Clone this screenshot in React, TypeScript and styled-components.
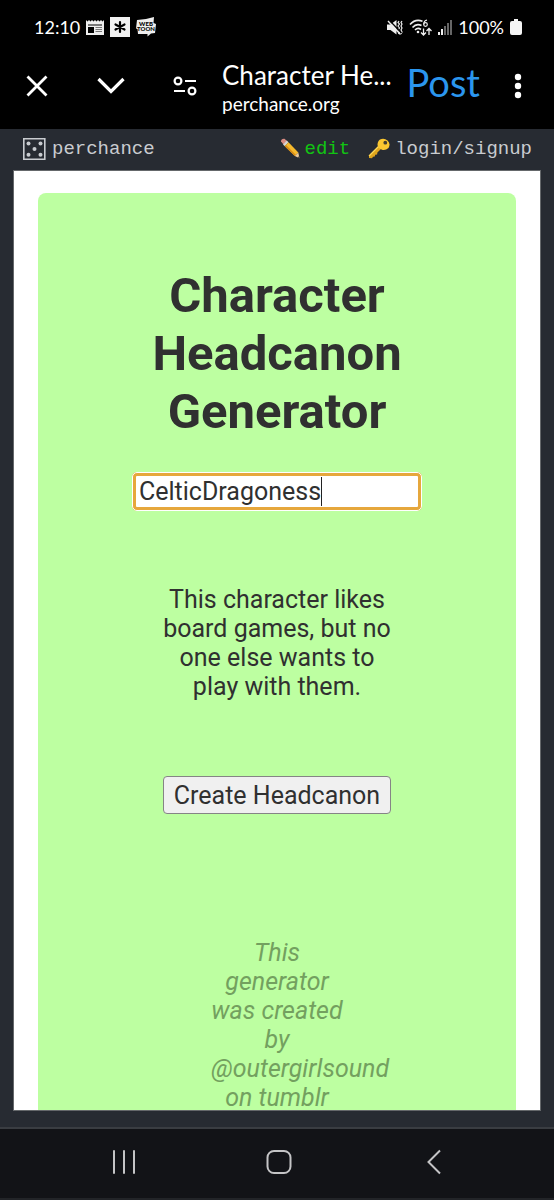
import React, { useState } from 'react';
import styled, { createGlobalStyle } from 'styled-components';

const GlobalStyle = createGlobalStyle`
  *, *::before, *::after { box-sizing: border-box; }
  body { margin: 0; background: #272b32; }
  h1, p { margin: 0; }
  button, input { font: inherit; color: inherit; margin: 0; }
  button { cursor: pointer; }
  svg { display: block; flex: none; }
`;

const Screen = styled.div`
  display: flex;
  flex-direction: column;
  height: 100vh;
  background: #272b32;
  font-family: Roboto, sans-serif;
`;

const PhoneTop = styled.header`
  flex: none;
  background: #000;
  color: #fff;
  font-family: Lato, sans-serif;
`;

const StatusBar = styled.div`
  display: flex;
  align-items: center;
  justify-content: space-between;
  height: 54px;
  padding: 0 32px 0 34px;
`;

const StatusGroup = styled.div<{ $gap: number }>`
  display: flex;
  align-items: center;
  gap: ${(p) => p.$gap}px;
`;

const StatusText = styled.span`
  font-size: 18px;
  line-height: 24px;
`;

const AppBar = styled.div`
  display: flex;
  align-items: center;
  height: 75px;
  padding: 0 8px 12px 20px;
`;

const IconButton = styled.button<{ $width: number }>`
  display: flex;
  align-items: center;
  justify-content: center;
  flex: none;
  width: ${(p) => p.$width}px;
  height: 48px;
  padding: 0;
  border: 0;
  background: none;
`;

const TitleBlock = styled.div`
  flex: 1;
  min-width: 0;
  padding: 4px 0 0 20px;
  white-space: nowrap;
`;

const PageTitle = styled.div`
  font-size: 26px;
  line-height: 32px;
`;

const PageHost = styled.div`
  font-size: 19px;
  line-height: 26px;
`;

const PostButton = styled.button`
  flex: none;
  margin-right: 10px;
  padding: 0 0 8px;
  border: 0;
  background: none;
  color: #2b96ee;
  font-size: 38px;
  line-height: 48px;
`;

const SiteBar = styled.nav`
  display: flex;
  align-items: center;
  justify-content: space-between;
  flex: none;
  height: 41px;
  padding: 0 22px 2px;
  font-family: 'Liberation Mono', monospace;
  font-size: 19px;
  line-height: 24px;
`;

const SiteLinks = styled.div`
  display: flex;
  gap: 18px;
`;

const SiteLink = styled.a<{ $color: string }>`
  display: flex;
  align-items: center;
  gap: 5px;
  color: ${(p) => p.$color};
  text-decoration: none;
`;

const Frame = styled.main`
  flex: 1 1 0;
  min-height: 0;
  margin: 0 13px 16px;
  padding: 22px 24px 0;
  border: 1px solid #65686b;
  background: #fff;
  overflow: hidden;
`;

const Card = styled.section`
  display: flex;
  flex-direction: column;
  align-items: center;
  padding: 74px 64px;
  border-radius: 8px;
  background: #bdffa1;
  color: #303030;
  font-size: 25px;
  line-height: 29px;
  text-align: center;
`;

const Heading = styled.h1`
  font-size: 49px;
  line-height: 58px;
  font-weight: 700;
`;

const NameField = styled.div`
  position: relative;
  width: 290px;
  margin-top: 31px;
`;

const NameInput = styled.input`
  display: block;
  width: 100%;
  height: 39px;
  padding: 0 3px;
  border: 4px solid #e6a73c;
  border-radius: 5px;
  outline: 1px solid #fff;
  outline-offset: -1px;
  background: #fff;
  caret-color: transparent;
`;

const Caret = styled.span`
  position: absolute;
  top: 5px;
  left: 189px;
  width: 1px;
  height: 29px;
  background: #222;
`;

const Headcanon = styled.p`
  width: 232px;
  margin-top: 74px;
`;

const CreateButton = styled.button`
  height: 38px;
  margin-top: 75px;
  padding: 0 10px;
  border: 1px solid #858585;
  border-radius: 4px;
  background: #f0f0f0;
  white-space: nowrap;
`;

const Credit = styled.p`
  width: 132px;
  margin-top: 124px;
  color: #73a05f;
  font-style: italic;
`;

const PhoneNav = styled.footer`
  display: flex;
  align-items: center;
  justify-content: space-around;
  flex: none;
  height: 73px;
  padding: 0 43px 3px 46px;
  border-top: 2px solid #3a3d42;
  border-bottom: 2px solid #222428;
  background: #121317;
`;

const NavButton = styled.button`
  display: flex;
  justify-content: center;
  width: 80px;
  padding: 10px 0;
  border: 0;
  background: none;
`;

const NewsIcon = () => (
  <svg width="18" height="17" viewBox="0 0 18 17" aria-hidden="true">
    <path d="M0 1l1.500 1.500L3 1l1.500 1.500L6 1l1.500 1.500L9 1l1.500 1.500L12 1l1.500 1.500L15 1l1.500 1.500L18 1v15H0z" fill="#eee" />
    <path d="M2 6h14" stroke="#000" />
    <path d="M9.500 8.500H16M9.500 10.500H16M9.500 12.500H16" stroke="#777" />
    <path d="M2 8h6v6H2z" fill="#000" />
  </svg>
);

const AsteriskIcon = () => (
  <svg width="20" height="20" viewBox="0 0 20 20" aria-hidden="true">
    <path d="M0 0h20v20H0z" fill="#f2f2f2" />
    <path d="M10 5v10M5.500 7.500l9 5M14.500 7.500l-9 5" stroke="#000" strokeWidth="2.200" strokeLinecap="round" />
  </svg>
);

const WebtoonIcon = () => (
  <svg width="20" height="20" viewBox="0 0 20 20" role="img" aria-label="Webtoon">
    <path d="M1 3l9-1 8-2-.5 6L20 7l-1 9-4 .5-3.500 3v-2.500L2 17l-.5-5L0 11.500z" fill="#eee" />
    <text x="10" y="8.500" fontSize="6" fontWeight="900" textAnchor="middle" fontFamily="Lato, sans-serif">WEB</text>
    <text x="10" y="14" fontSize="6" fontWeight="900" textAnchor="middle" fontFamily="Lato, sans-serif">TOON</text>
  </svg>
);

const MuteIcon = () => (
  <svg width="16" height="17" viewBox="0 0 16 17" fill="none" aria-hidden="true">
    <path d="M0 5.500h3.500L9.500 1v14.500L3.500 11H0z" fill="#eee" />
    <path d="M12 2l-1 1.500L12.500 5 11 7l1.500 2L11 11l1.500 2-1 2M15 2l-1 1.500L15 5l-1 2 1 2-1 2 1 2-1 2" stroke="#eee" strokeWidth="1.200" />
    <path d="M2.500 1.500l12 12.500" stroke="#000" strokeWidth="1.400" />
    <path d="M1 2l12.500 13.500" stroke="#eee" strokeWidth="1.400" />
  </svg>
);

const WifiIcon = () => (
  <svg width="23" height="17" viewBox="0 0 23 17" fill="none" stroke="#eee" strokeWidth="1.600" aria-hidden="true">
    <path d="M1 5.500C4.500 1.500 9 .5 13.500 2.200M3.500 8.500C6 5.500 9.500 5 12.500 6.500M6 11c2-2 4-2 6-.5" />
    <circle cx="9" cy="13" r="1.300" fill="#eee" stroke="none" />
    <circle cx="16.500" cy="5.500" r="1.800" strokeWidth="1.200" />
    <path d="M14.800 5.500C14.800 3 15.500 1.500 18 1.200" strokeWidth="1.200" />
    <path d="M14.500 9.500V16m-2.500-2.500l2.500 2.500 2.500-2.500M20 16V9.500M17.500 12L20 9.500l2.500 2.500" strokeWidth="1.300" />
  </svg>
);

const SignalIcon = () => (
  <svg width="14" height="15" viewBox="0 0 14 15" aria-hidden="true">
    <path d="M0 12h2v3H0zM3 9h2v6H3z" fill="#eee" />
    <path d="M6 6h2v9H6zM9 3h2v12H9zM12 0h2v15h-2z" fill="#666" />
  </svg>
);

const BatteryIcon = () => (
  <svg width="12" height="16" viewBox="0 0 12 16" aria-hidden="true">
    <path d="M4 0h4v2h2a2 2 0 0 1 2 2v10a2 2 0 0 1-2 2H2a2 2 0 0 1-2-2V4a2 2 0 0 1 2-2h2z" fill="#f5f5f5" />
  </svg>
);

const CloseIcon = () => (
  <svg width="22" height="22" viewBox="0 0 22 22" aria-hidden="true">
    <path d="M1.500 1.500l19 19M20.500 1.500l-19 19" stroke="#fff" strokeWidth="2.800" />
  </svg>
);

const ChevronIcon = () => (
  <svg width="28" height="18" viewBox="0 0 28 18" fill="none" aria-hidden="true">
    <path d="M1.500 2L14 14.500 26.500 2" stroke="#fff" strokeWidth="3.200" />
  </svg>
);

const TuneIcon = () => (
  <svg width="24" height="20" viewBox="0 0 24 20" fill="none" stroke="#fff" strokeWidth="2.200" aria-hidden="true">
    <circle cx="5" cy="5" r="3.400" />
    <path d="M12 5h11M1 15h11" />
    <circle cx="19" cy="15" r="3.400" />
  </svg>
);

const MoreIcon = () => (
  <svg width="8" height="26" viewBox="0 0 8 26" fill="#fff" aria-hidden="true">
    <circle cx="4" cy="4" r="3.200" />
    <circle cx="4" cy="13" r="3.200" />
    <circle cx="4" cy="22" r="3.200" />
  </svg>
);

const DiceIcon = () => (
  <svg width="25" height="24" viewBox="0 0 25 24" fill="#c9ccd0" aria-hidden="true">
    <path d="M1.800 1.800h21v20.500h-21z" fill="none" stroke="#c9ccd0" strokeWidth="1.600" />
    <circle cx="6.500" cy="6.500" r="2" />
    <circle cx="18.500" cy="6.500" r="2" />
    <circle cx="12.500" cy="12" r="2" />
    <circle cx="6.500" cy="17.700" r="2" />
    <circle cx="18.500" cy="17.700" r="2" />
  </svg>
);

const PencilIcon = () => (
  <svg width="20" height="21" viewBox="0 0 20 21" aria-hidden="true">
    <path d="M1 3.500Q1 .5 4.500.8L7 3 3.500 6.500z" fill="#d98c83" />
    <path d="M3 6.500L6.800 2.500 8.500 4.300 4.800 8.200z" fill="#d8d5cf" />
    <path d="M4.800 8.200L8.500 4.300 18.300 14.500 14.800 18z" fill="#f6b92c" />
    <path d="M4.800 8.200L6 6.900 16 17l-1.200 1z" fill="#d58a16" />
    <path d="M14.800 18l3.500-3.500 1.200 5.700z" fill="#edc99a" />
    <path d="M17.700 19.500l1.500-1.400.4 2.200z" fill="#333" />
  </svg>
);

const KeyIcon = () => (
  <svg width="22" height="21" viewBox="0 0 22 21" aria-hidden="true">
    <path d="M10.500 8L1 17.500V20l3 .3 1-1.600 1.800-.1.400-1.900 1.900-.3.300-1.900 4.600-4.500z" fill="#dfa51d" />
    <path d="M10.500 8.500L1 18" stroke="#ffd957" strokeWidth="1.300" />
    <path d="M12 1.500Q16-.5 19.500 2.500T20.500 10Q17 13 13.500 11.500T9.500 7Q9.500 3 12 1.500z" fill="#fbc730" />
    <circle cx="17.300" cy="4.700" r="1.900" fill="#45402f" />
  </svg>
);

const RecentsIcon = () => (
  <svg width="24" height="24" viewBox="0 0 24 24" aria-hidden="true">
    <path d="M2 1v22M12 1v22M22 1v22" stroke="#c4c4c6" strokeWidth="2" strokeLinecap="round" />
  </svg>
);

const HomeIcon = () => (
  <svg width="26" height="24" viewBox="0 0 26 24" aria-hidden="true">
    <rect x="1.500" y="1" width="23" height="22" rx="6.500" fill="none" stroke="#c4c4c6" strokeWidth="2" />
  </svg>
);

const BackIcon = () => (
  <svg width="14" height="26" viewBox="0 0 14 26" aria-hidden="true">
    <path d="M13 1.500L1.500 13 13 24.500" fill="none" stroke="#c4c4c6" strokeWidth="2" />
  </svg>
);

export default function App() {
  const [name, setName] = useState('CelticDragoness');

  return (
    <>
      <GlobalStyle />
      <Screen>
        <PhoneTop>
          <StatusBar>
            <StatusGroup $gap={6}>
              <StatusText>12:10</StatusText>
              <NewsIcon />
              <AsteriskIcon />
              <WebtoonIcon />
            </StatusGroup>
            <StatusGroup $gap={6}>
              <MuteIcon />
              <WifiIcon />
              <SignalIcon />
              <StatusText>100%</StatusText>
              <BatteryIcon />
            </StatusGroup>
          </StatusBar>
          <AppBar>
            <IconButton $width={34} aria-label="Close"><CloseIcon /></IconButton>
            <IconButton $width={114} aria-label="Minimize"><ChevronIcon /></IconButton>
            <IconButton $width={34} aria-label="Site settings"><TuneIcon /></IconButton>
            <TitleBlock>
              <PageTitle>Character He...</PageTitle>
              <PageHost>perchance.org</PageHost>
            </TitleBlock>
            <PostButton>Post</PostButton>
            <IconButton $width={56} aria-label="More options"><MoreIcon /></IconButton>
          </AppBar>
        </PhoneTop>

        <SiteBar>
          <SiteLink href="#home" $color="#c9ccd0"><DiceIcon />perchance</SiteLink>
          <SiteLinks>
            <SiteLink href="#edit" $color="#12c412"><PencilIcon />edit</SiteLink>
            <SiteLink href="#login" $color="#c9ccd0"><KeyIcon />login/signup</SiteLink>
          </SiteLinks>
        </SiteBar>

        <Frame>
          <Card>
            <Heading>Character Headcanon Generator</Heading>
            <NameField>
              <NameInput
                type="text"
                aria-label="Character name"
                value={name}
                onChange={(e) => setName(e.target.value)}
              />
              <Caret />
            </NameField>
            <Headcanon>
              This character likes board games, but no one else wants to play with them.
            </Headcanon>
            <CreateButton>Create Headcanon</CreateButton>
            <Credit>This generator was created by @outergirlsound on tumblr</Credit>
          </Card>
        </Frame>

        <PhoneNav>
          <NavButton aria-label="Recent apps"><RecentsIcon /></NavButton>
          <NavButton aria-label="Home"><HomeIcon /></NavButton>
          <NavButton aria-label="Back"><BackIcon /></NavButton>
        </PhoneNav>
      </Screen>
    </>
  );
}
